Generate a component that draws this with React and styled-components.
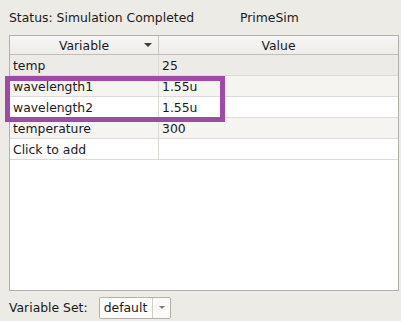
import React from "react";
import styled, { createGlobalStyle } from "styled-components";

const rows = [
  { name: "temp", value: "25", tone: "grey" },
  { name: "wavelength1", value: "1.55u", tone: "light" },
  { name: "wavelength2", value: "1.55u", tone: "white" },
  { name: "temperature", value: "300", tone: "light" },
  { name: "Click to add", value: "", tone: "white" },
];

const tones = { grey: "#edebe7", light: "#f5f4f1", white: "#ffffff" };

const App = () => {
  return (
    <Page>
      <Global />
      <StatusBar>
        <StatusText>Status: Simulation Completed</StatusText>
        <Tool>PrimeSim</Tool>
      </StatusBar>
      <TableFrame>
        <HeaderRow>
          <HeaderCell>
            Variable
            <SortArrow />
          </HeaderCell>
          <HeaderCell>Value</HeaderCell>
        </HeaderRow>
        {rows.map((r) => (
          <Row key={r.name} tone={r.tone}>
            <Cell>{r.name}</Cell>
            <Cell>{r.value}</Cell>
          </Row>
        ))}
        <Highlight />
      </TableFrame>
      <Footer>
        <span>Variable Set:</span>
        <Combo>
          <ComboText>default</ComboText>
          <ComboButton>
            <SmallArrow />
          </ComboButton>
        </Combo>
      </Footer>
    </Page>
  );
};

const Global = createGlobalStyle`
  html, body {
    margin: 0;
    padding: 0;
    background: #edebe6;
  }
`;

const Page = styled.div`
  width: 401px;
  height: 321px;
  background: #edebe6;
  font-family: "DejaVu Sans", sans-serif;
  font-size: 12.4px;
  color: #1a1a1a;
  display: flex;
  flex-direction: column;
  overflow: hidden;
`;

const StatusBar = styled.div`
  height: 35px;
  display: flex;
  align-items: center;
  padding-left: 9px;
  padding-bottom: 1px;
  box-sizing: border-box;
`;

const StatusText = styled.span`
  width: 231px;
`;

const Tool = styled.span``;

const TableFrame = styled.div`
  position: relative;
  margin-left: 9px;
  width: 390px;
  height: 256px;
  box-sizing: border-box;
  border: 1px solid #b3b0aa;
  background: #ffffff;
`;

const HeaderRow = styled.div`
  display: grid;
  grid-template-columns: 149px 1fr;
  height: 18px;
  background: linear-gradient(#f7f6f4, #efede9);
  border-bottom: 1px solid #c2bfb9;
`;

const HeaderCell = styled.div`
  position: relative;
  display: flex;
  align-items: center;
  justify-content: center;
  border-right: 1px solid #c9c6c0;
  &:last-child {
    border-right: none;
  }
`;

const SortArrow = styled.span`
  position: absolute;
  right: 6px;
  top: 7px;
  width: 0;
  height: 0;
  border-left: 4px solid transparent;
  border-right: 4px solid transparent;
  border-top: 4px solid #3c3c3c;
`;

const Row = styled.div`
  display: grid;
  grid-template-columns: 149px 1fr;
  height: 20px;
  background: ${(p) => tones[p.tone]};
  border-bottom: 1px solid #dddad5;
`;

const Cell = styled.div`
  display: flex;
  align-items: center;
  padding-left: 3px;
  border-right: 1px solid #dddad5;
  &:last-child {
    border-right: none;
  }
`;

const Highlight = styled.div`
  position: absolute;
  left: -5px;
  top: 40px;
  width: 220px;
  height: 46px;
  box-sizing: border-box;
  border: 5px solid #a04aa8;
  pointer-events: none;
`;

const Footer = styled.div`
  flex: 1;
  display: flex;
  align-items: center;
  gap: 11px;
  padding-left: 9px;
  padding-top: 3px;
`;

const Combo = styled.div`
  display: flex;
  height: 22px;
  box-sizing: border-box;
  border: 1px solid #b3b0aa;
  border-radius: 2px;
  background: #ffffff;
`;

const ComboText = styled.div`
  display: flex;
  align-items: center;
  padding: 0 5px 0 4px;
  border-right: 1px solid #d0cdc8;
`;

const ComboButton = styled.div`
  width: 17px;
  display: flex;
  align-items: center;
  justify-content: center;
  background: #fbfaf9;
`;

const SmallArrow = styled.span`
  width: 0;
  height: 0;
  border-left: 3px solid transparent;
  border-right: 3px solid transparent;
  border-top: 3px solid #7a7a7a;
`;

export default App;
